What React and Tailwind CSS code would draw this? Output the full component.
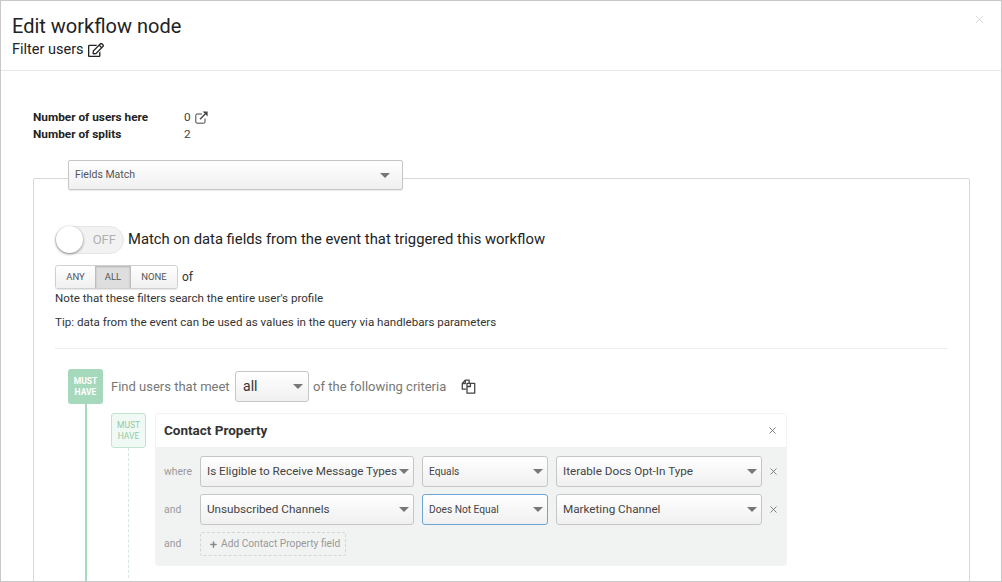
import { X, Plus } from "lucide-react";
import { FaRegEdit } from "react-icons/fa";

const Caret = () => (
  <span className="w-0 h-0 border-x-[5px] border-x-transparent border-t-[5px] border-t-[#777] shrink-0" />
);

const Select = ({ label, width, small, focus }) => (
  <div
    className={`flex items-center justify-between shrink-0 h-[31px] pl-[6px] pr-[4px] rounded-[3px] border bg-gradient-to-b from-white to-[#f0f0f0] text-[#444] ${width} ${
      small ? "text-[10.2px]" : "text-[11.7px]"
    } ${focus ? "border-[#6ea6d2]" : "border-[#c6c6c6]"}`}
  >
    <span className="whitespace-nowrap">{label}</span>
    <Caret />
  </div>
);

const CopyIcon = () => (
  <svg width="15" height="15" viewBox="0 0 14 14" fill="none" stroke="#444" strokeWidth="1.2" strokeLinejoin="round">
    <path d="M5 9.5H1.2V4.2L4 1h3.6v3" />
    <path d="M4 1v3.2H1.2" />
    <path d="M5.6 4h7.2v9.2H5.6z" />
    <path d="M8.8 4v3H5.6" />
  </svg>
);

const LinkOutIcon = () => (
  <svg width="13" height="13" viewBox="0 0 13 13" fill="none">
    <path d="M7 3H2a1.2 1.2 0 0 0-1.2 1.2V11A1.2 1.2 0 0 0 2 12.2h6.8A1.2 1.2 0 0 0 10 11V7.5" stroke="#444" strokeWidth="1" />
    <path d="M5 8.2 10.2 3" stroke="#444" strokeWidth="1.4" />
    <path d="M7.6 0.6H12.6V5.6Z" fill="#444" />
  </svg>
);

const Row = ({ word, field, operator, value, focus }) => (
  <div className="flex items-center h-[31px]">
    <span className="w-[44px] pl-[8px] text-[10.4px] text-[#999]">{word}</span>
    <Select label={field} width="w-[214px]" />
    <div className="w-2 shrink-0" />
    <Select label={operator} width="w-[126px]" small focus={focus} />
    <div className="w-2 shrink-0" />
    <Select label={value} width="w-[206px]" />
    <X size={11} className="text-[#777] ml-[6px] shrink-0" />
  </div>
);

export default function App() {
  return (
    <div className="h-[582px] w-[1002px] overflow-hidden bg-white border border-[#c8c8c8] font-['Roboto','Lato',sans-serif] text-[#333]">
      {/* header */}
      <div className="relative h-[70px] border-b border-[#e8e8e8] pl-[11px] pt-[12px]">
        <h1 className="text-[20px] leading-[27px] text-[#222]">Edit workflow node</h1>
        <div className="flex items-center gap-[4px] text-[14.5px] leading-[20px] text-[#222]">
          Filter users
          <FaRegEdit size={16} />
        </div>
        <X size={13} strokeWidth={1} className="absolute right-[15px] top-[12px] text-[#bbb]" />
      </div>

      {/* node stats */}
      <div className="pl-[32px] pt-[38px] text-[11.8px] leading-[16.5px]">
        <div className="flex">
          <span className="w-[151px] font-bold text-[#222]">Number of users here</span>
          <span className="flex items-center gap-[4px] text-[#444]">
            0
            <LinkOutIcon />
          </span>
        </div>
        <div className="flex">
          <span className="w-[151px] font-bold text-[#222]">Number of splits</span>
          <span className="text-[#444]">2</span>
        </div>
      </div>

      {/* filter box */}
      <div className="ml-[32px] mr-[31px] mt-[36px] border border-[#d8d8d8] rounded-t-[2px] h-[500px] px-[21px]">
        <div className="relative flex items-center justify-between w-[335px] h-[30px] -mt-[19px] ml-[13px] pl-[6px] pr-[12px] bg-gradient-to-b from-white to-[#f0f0f0] border border-[#c6c6c6] rounded-[2px] shadow-[0_1px_1px_rgba(0,0,0,0.08)] text-[10.5px] text-[#555]">
          Fields Match
          <Caret />
        </div>

        <div className="flex items-center mt-[35px] h-[29px]">
          <div className="flex items-center justify-between w-[69px] h-[28px] rounded-full border border-[#e6e6e6] bg-[#f2f2f2] pr-[7px]">
            <span className="w-[27px] h-[27px] rounded-full bg-white shadow-[0_1px_3px_rgba(0,0,0,0.45)]" />
            <span className="text-[13px] text-[#b0b0b0]">OFF</span>
          </div>
          <span className="ml-[4px] text-[14.8px] text-[#222]">Match on data fields from the event that triggered this workflow</span>
        </div>

        <div className="flex items-center mt-[11px] h-[24px]">
          <div className="flex h-[24px] rounded-[3px] border border-[#d0d0d0] shadow-[0_1px_1px_rgba(0,0,0,0.1)] text-[9.5px] text-[#555]">
            <span className="flex items-center justify-center w-[39px] bg-gradient-to-b from-white to-[#f0f0f0] rounded-l-[3px]">ANY</span>
            <span className="flex items-center justify-center w-[36px] bg-[#dedede] border-x border-[#bdbdbd] shadow-[inset_0_1px_2px_rgba(0,0,0,0.2)]">ALL</span>
            <span className="flex items-center justify-center w-[46px] bg-gradient-to-b from-white to-[#f0f0f0] rounded-r-[3px]">NONE</span>
          </div>
          <span className="ml-[4px] text-[12px] text-[#333]">of</span>
        </div>

        <p className="mt-[1px] text-[11.6px] leading-[17px] text-[#333]">Note that these filters search the entire user's profile</p>
        <p className="mt-[7px] text-[11.6px] leading-[17px] text-[#333]">Tip: data from the event can be used as values in the query via handlebars parameters</p>

        <div className="mt-[17px] border-t border-[#eeeeee] w-[893px]" />

        {/* query builder */}
        <div className="flex mt-[20px] ml-[13px]">
          <div className="flex flex-col items-center w-[35px]">
            <div className="flex items-center justify-center w-[35px] h-[35px] rounded-[3px] bg-[#a6d8bb] text-white text-[8.5px] font-bold leading-[11px] text-center">
              MUST<br />HAVE
            </div>
            <div className="w-[2px] h-[300px] bg-[#a6d8bb]" />
          </div>

          <div className="ml-[8px]">
            <div className="flex items-center h-[35px] text-[13px] text-[#777]">
              Find users that meet
              <div className="flex items-center justify-between w-[74px] h-[31px] ml-[5.5px] mr-[4px] pl-[7px] pr-[5px] rounded-[3px] border border-[#c6c6c6] bg-gradient-to-b from-white to-[#f0f0f0] text-[14px] text-[#333]">
                all
                <Caret />
              </div>
              of the following criteria
              <span className="ml-[15px] flex"><CopyIcon /></span>
            </div>

            <div className="flex mt-[9px]">
              <div className="flex flex-col items-center w-[35px]">
                <div className="flex items-center justify-center w-[35px] h-[35px] rounded-[3px] border border-[#bfe3ce] bg-[#f1f9f4] text-[#8fcba8] text-[8.5px] leading-[11px] text-center">
                  MUST<br />HAVE
                </div>
                <div className="h-[130px] border-l border-dashed border-[#d3eadc]" />
              </div>

              <div className="ml-[9px] w-[632px] h-[153px] rounded-[3px] border border-[#f3f3f3] flex flex-col">
                <div className="flex items-center justify-between h-[33px] pl-[8px] pr-[8px] text-[13.5px] font-bold text-[#333]">
                  Contact Property
                  <X size={11} className="text-[#777]" />
                </div>
                <div className="flex-1 bg-[#f1f3f3] rounded-b-[3px] pt-[9px]">
                  <Row word="where" field="Is Eligible to Receive Message Types" operator="Equals" value="Iterable Docs Opt-In Type" />
                  <div className="h-[7px]" />
                  <Row word="and" field="Unsubscribed Channels" operator="Does Not Equal" value="Marketing Channel" focus />
                  <div className="flex items-center mt-[7px] h-[24px]">
                    <span className="w-[44px] pl-[8px] text-[10.4px] text-[#999]">and</span>
                    <div className="flex items-center gap-[3px] w-[146px] h-[24px] pl-[8px] border border-dashed border-[#d4d6d6] rounded-[2px] text-[10.2px] text-[#999] whitespace-nowrap">
                      <Plus size={9} strokeWidth={4} className="text-[#888] shrink-0" />
                      Add Contact Property field
                    </div>
                  </div>
                </div>
              </div>
            </div>
          </div>
        </div>
      </div>
    </div>
  );
}
